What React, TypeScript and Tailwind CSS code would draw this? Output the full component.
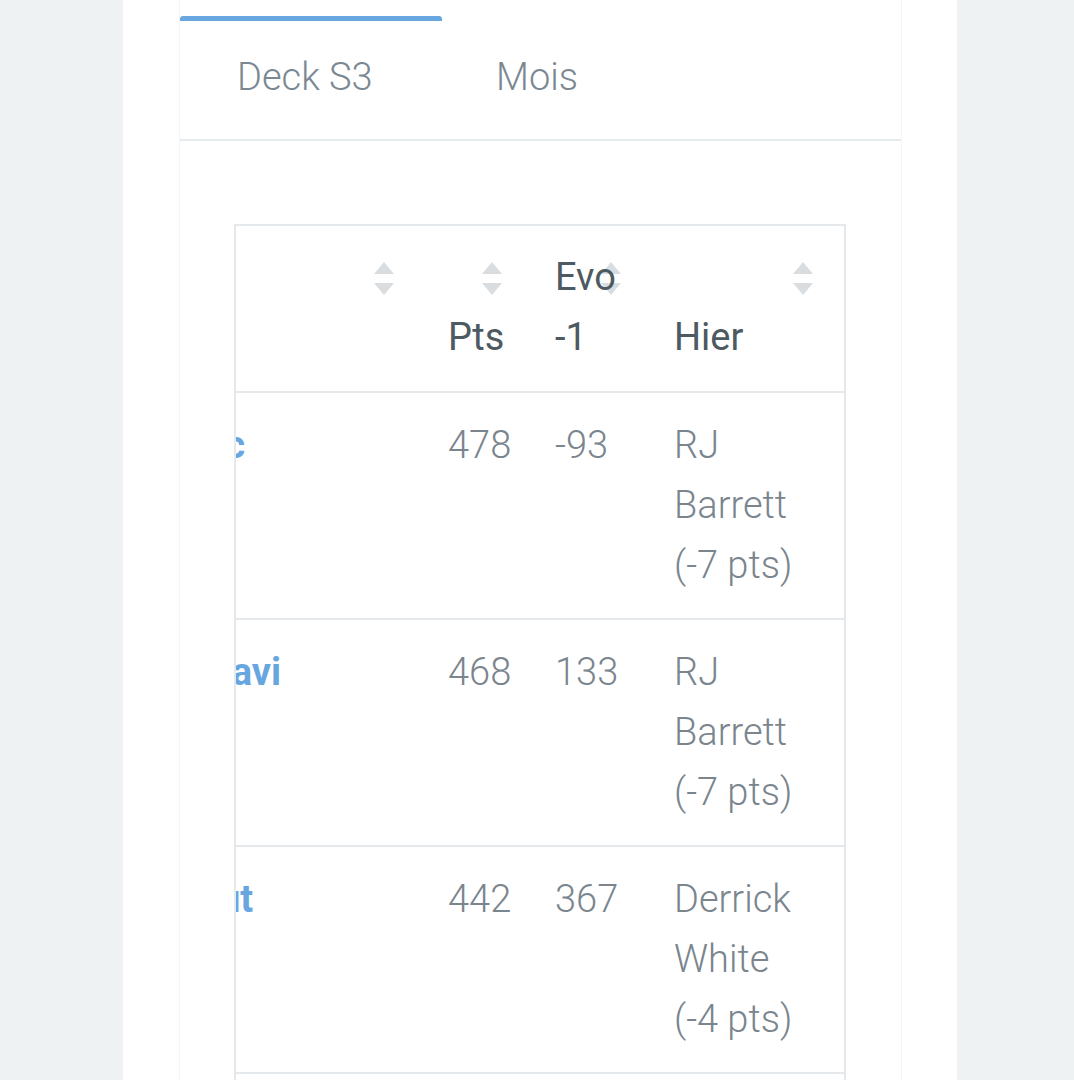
import React from 'react';

interface Row {
    pseudo: string;
    pts: number;
    evo: number;
    hier: string;
}

const rows: Row[] = [
    { pseudo: 'Ludovic', pts: 478, evo: -93, hier: 'RJ Barrett (-7 pts)' },
    { pseudo: 'Petit-Xavi', pts: 468, evo: 133, hier: 'RJ Barrett (-7 pts)' },
    { pseudo: 'Raspout', pts: 442, evo: 367, hier: 'Derrick White (-4 pts)' },
    { pseudo: 'Mamadou', pts: 431, evo: 52, hier: 'Josh Giddey (-3 pts)' },
];

// petites flèches de tri (style datatables)
const SortIcon = ({ className }: { className: string }) => (
    <svg width="20" height="34" viewBox="0 0 20 34" className={`absolute top-[36px] ${className}`}>
        <polygon points="10,0 20,12 0,12" fill="#d9dde0" />
        <polygon points="0,21 20,21 10,33" fill="#d9dde0" />
    </svg>
);

const grid = 'grid grid-cols-[324px_108px_118px_218px]';

const App = () => {
    return (
        <div className="min-h-screen bg-[#eef2f3] flex font-['Roboto',sans-serif]">
            <div className="w-[123px] shrink-0" />
            <div className="w-[834px] shrink-0 bg-white pl-[56px]">
                <div className="w-[723px] min-h-[1080px] border-x border-[#f3f5f6]">
                    {/* onglets */}
                    <div className="flex pt-[16px] border-b-2 border-[#e6ebed] text-[38px] leading-[60px] font-light text-[#7b8892]">
                        <div className="w-[262px] border-t-[5px] border-[#68a6df] rounded-t-[3px] pl-[57px] pt-[26px] pb-[32px]">
                            Deck S3
                        </div>
                        <div className="border-t-[5px] border-transparent pl-[54px] pt-[26px] pb-[32px]">
                            Mois
                        </div>
                    </div>

                    {/* classement */}
                    <div className="pt-[83px] pl-[54px]">
                        <div className="w-[612px] border-2 border-[#e5e9eb] overflow-hidden text-[38px] leading-[60px]">
                            <div className="-ml-[160px]">
                                <div className={`${grid} items-end border-b-2 border-[#e5e9eb] text-[#4d5a61]`}>
                                    <div className="relative pl-[36px] pt-[21px] pb-[24px] h-full flex items-end">
                                        Nom
                                        <SortIcon className="right-[6px]" />
                                    </div>
                                    <div className="relative pl-[48px] pt-[21px] pb-[24px] h-full flex items-end">
                                        Pts
                                        <SortIcon className="right-[6px]" />
                                    </div>
                                    <div className="relative pl-[47px] pt-[21px] pb-[24px] h-full">
                                        <div className="w-[60px] relative z-10">Evo -1</div>
                                        <SortIcon className="right-[5px]" />
                                    </div>
                                    <div className="relative pl-[48px] pt-[21px] pb-[24px] h-full flex items-end">
                                        Hier
                                        <SortIcon className="right-[31px]" />
                                    </div>
                                </div>
                                {rows.map((r) => (
                                    <div key={r.pseudo} className={`${grid} border-b-2 border-[#e5e9eb] text-[#7a858e] font-light`}>
                                        <div className="pl-[36px] pt-[22px] pb-[23px]">
                                            <a href="#" className="font-bold text-[#68a6df]">{r.pseudo}</a>
                                        </div>
                                        <div className="pl-[48px] pt-[22px] pb-[23px]">{r.pts}</div>
                                        <div className="pl-[47px] pt-[22px] pb-[23px]">{r.evo}</div>
                                        <div className="pl-[48px] pt-[22px] pb-[23px]">
                                            <div className="w-[145px]">{r.hier}</div>
                                        </div>
                                    </div>
                                ))}
                            </div>
                        </div>
                    </div>
                </div>
            </div>
        </div>
    );
};

export default App;
